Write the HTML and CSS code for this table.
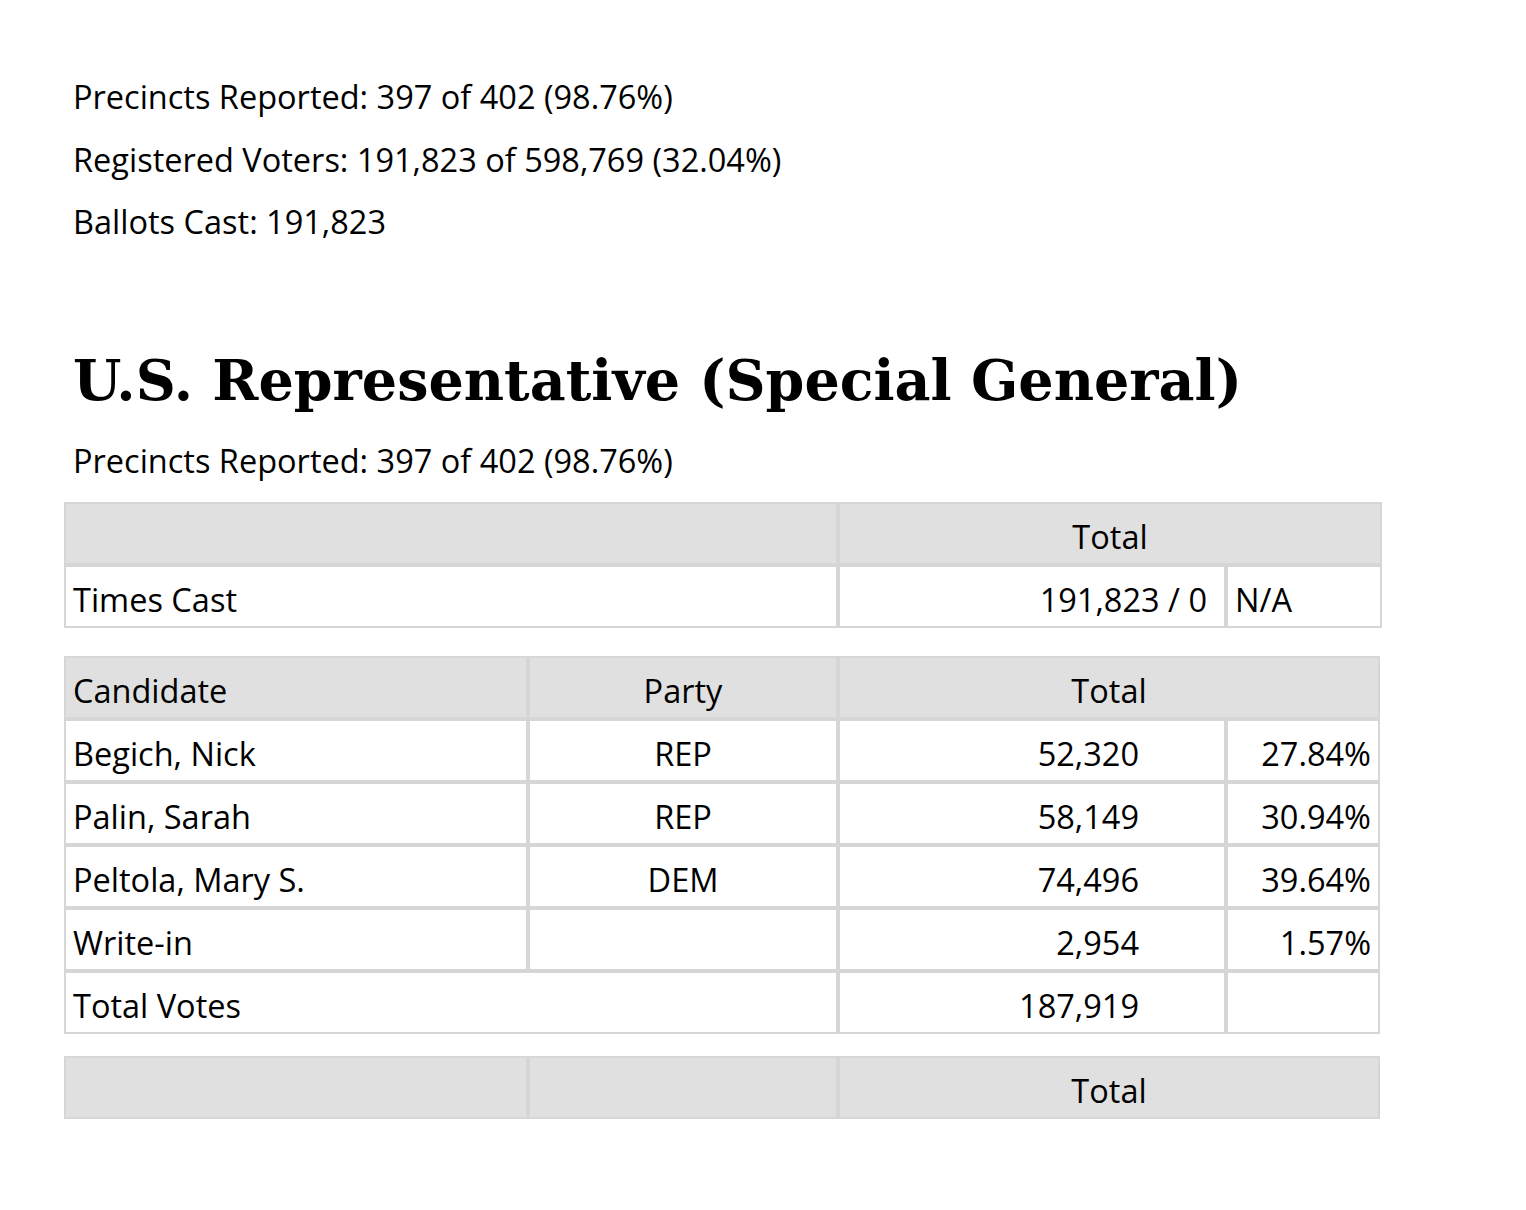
FILE: index.html
```html
<!DOCTYPE html>
<html lang="en">
<head>
<meta charset="utf-8">
<title>Election Results</title>
<link rel="stylesheet" href="styles.css">
</head>
<body>
<main class="page">
  <section class="summary">
    <p class="line">Precincts Reported: 397 of 402 (98.76%)</p>
    <p class="line">Registered Voters: 191,823 of 598,769 (32.04%)</p>
    <p class="line">Ballots Cast: 191,823</p>
  </section>

  <section class="race">
    <h2 class="race-title">U.S. Representative (Special General)</h2>
    <p class="line">Precincts Reported: 397 of 402 (98.76%)</p>

    <table class="grid grid-cast">
      <colgroup>
        <col class="c-wide">
        <col class="c-votes">
        <col class="c-pct">
      </colgroup>
      <thead>
        <tr>
          <th class="hd"></th>
          <th class="hd center" colspan="2">Total</th>
        </tr>
      </thead>
      <tbody>
        <tr>
          <td>Times Cast</td>
          <td class="right cast-num">191,823 / 0</td>
          <td>N/A</td>
        </tr>
      </tbody>
    </table>

    <table class="grid grid-cand">
      <colgroup>
        <col class="c-name">
        <col class="c-party">
        <col class="c-votes">
        <col class="c-pct2">
      </colgroup>
      <thead>
        <tr>
          <th class="hd">Candidate</th>
          <th class="hd center">Party</th>
          <th class="hd center" colspan="2">Total</th>
        </tr>
      </thead>
      <tbody>
        <tr>
          <td>Begich, Nick</td>
          <td class="center">REP</td>
          <td class="right votes">52,320</td>
          <td class="right">27.84%</td>
        </tr>
        <tr>
          <td>Palin, Sarah</td>
          <td class="center">REP</td>
          <td class="right votes">58,149</td>
          <td class="right">30.94%</td>
        </tr>
        <tr>
          <td>Peltola, Mary S.</td>
          <td class="center">DEM</td>
          <td class="right votes">74,496</td>
          <td class="right">39.64%</td>
        </tr>
        <tr>
          <td>Write-in</td>
          <td class="center"></td>
          <td class="right votes">2,954</td>
          <td class="right">1.57%</td>
        </tr>
        <tr>
          <td colspan="2">Total Votes</td>
          <td class="right votes">187,919</td>
          <td></td>
        </tr>
      </tbody>
    </table>

    <table class="grid grid-last">
      <colgroup>
        <col class="c-name">
        <col class="c-party">
        <col class="c-votes">
        <col class="c-pct2">
      </colgroup>
      <thead>
        <tr>
          <th class="hd"></th>
          <th class="hd"></th>
          <th class="hd center" colspan="2">Total</th>
        </tr>
      </thead>
    </table>
  </section>
</main>
</body>
</html>
```

FILE: styles.css
```css
html, body {
  margin: 0;
  padding: 0;
  background: #ffffff;
}

body {
  font-family: "Open Sans", "Noto Sans", "Liberation Sans", sans-serif;
  font-size: 32.5px;
  color: #000000;
}

.page {
  padding: 66px 0 60px 64px;
}

.line {
  margin: 0;
  padding: 0 9px;
  line-height: 62.5px;
}

.race {
  margin-top: 87px;
}

.race-title {
  margin: 0 0 9px 0;
  padding: 0 9px;
  font-family: "DejaVu Serif", "Liberation Serif", serif;
  font-weight: bold;
  font-size: 55.5px;
  line-height: 80px;
}

.grid {
  border-collapse: separate;
  border-spacing: 0;
  table-layout: fixed;
  margin-top: 10px;
}

.grid-cast {
  width: 1318px;
}

.grid-cand {
  width: 1316px;
  margin-top: 28px;
}

.grid-last {
  width: 1316px;
  margin-top: 22px;
}

.c-wide { width: 774px; }
.c-votes { width: 388px; }
.c-pct { width: 156px; }
.c-name { width: 464px; }
.c-party { width: 310px; }
.c-pct2 { width: 154px; }

.grid th,
.grid td {
  border: 2px solid #d6d6d6;
  padding: 6px 7px 0 7px;
  height: 53px;
  font-weight: normal;
  text-align: left;
  vertical-align: middle;
  white-space: nowrap;
}

.grid th.hd {
  background: #e0e0e0;
}

.grid .center {
  text-align: center;
}

.grid .right {
  text-align: right;
}

.grid .votes {
  padding-right: 85px;
}

.grid .cast-num {
  padding-right: 17px;
}
```
